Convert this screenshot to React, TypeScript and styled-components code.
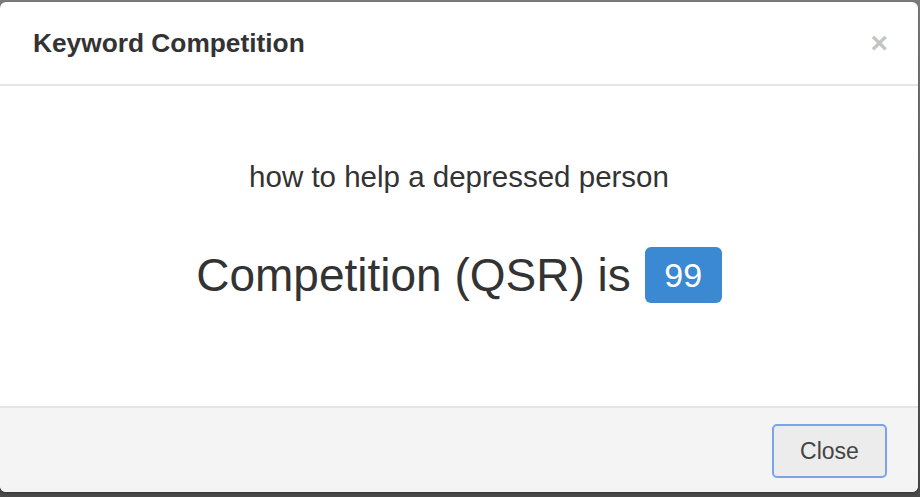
import React from "react";
import styled, { createGlobalStyle } from "styled-components";

const GlobalStyle = createGlobalStyle`
  html, body {
    margin: 0;
    padding: 0;
    height: 100%;
    overflow: hidden;
    background: #5a5a5a;
    font-family: "Liberation Sans", Arial, Helvetica, sans-serif;
  }
`;

const Backdrop = styled.div`
  height: 497px;
  padding-top: 2px;
  box-sizing: border-box;
  background: linear-gradient(#7c7c7c 0, #7c7c7c 10px, #4a4a4a 480px);
`;

const Modal = styled.div`
  width: 918px;
  height: 490px;
  background: #fff;
  border-radius: 6px;
  display: flex;
  flex-direction: column;
  overflow: hidden;
  box-shadow: 0 1px 3px rgba(0, 0, 0, 0.3);
`;

const Header = styled.div`
  height: 82px;
  flex: none;
  display: flex;
  align-items: center;
  justify-content: space-between;
  padding: 0 30px 0 33px;
  border-bottom: 2px solid #e5e5e5;
  box-sizing: content-box;
`;

const Title = styled.h4`
  margin: 0;
  font-size: 26.3px;
  font-weight: bold;
  color: #333;
`;

const CloseX = styled.button`
  border: none;
  background: none;
  padding: 0;
  font-size: 30px;
  font-weight: bold;
  line-height: 1;
  color: #c4c4c4;
  font-family: "Liberation Sans", Arial, sans-serif;
  cursor: pointer;
`;

const Body = styled.div`
  flex: 1;
  display: flex;
  flex-direction: column;
  align-items: center;
  padding-top: 76px;
  color: #333;
`;

const Keyword = styled.div`
  font-size: 29.5px;
  line-height: 30px;
`;

const Result = styled.div`
  margin-top: 55px;
  display: flex;
  align-items: center;
  gap: 14px;
  font-size: 46px;
  line-height: 56px;
`;

const Badge = styled.span`
  display: inline-flex;
  align-items: center;
  justify-content: center;
  width: 77px;
  height: 56px;
  border-radius: 6px;
  background: #3a89d2;
  color: #fff;
  font-size: 34px;
`;

const Footer = styled.div`
  height: 82px;
  flex: none;
  display: flex;
  align-items: center;
  justify-content: flex-end;
  padding: 2px 31px 0;
  background: #f4f4f4;
  border-top: 2px solid #e5e5e5;
`;

const Button = styled.button`
  width: 115px;
  height: 54px;
  border: 2px solid #7ba3ea;
  border-radius: 5px;
  background: #ececec;
  color: #444;
  font-size: 23px;
  font-family: "Liberation Sans", Arial, sans-serif;
  cursor: pointer;
`;

export default function App() {
  return (
    <>
      <GlobalStyle />
      <Backdrop>
        <Modal>
          <Header>
            <Title>Keyword Competition</Title>
            <CloseX aria-label="Close">×</CloseX>
          </Header>
          <Body>
            <Keyword>how to help a depressed person</Keyword>
            <Result>
              Competition (QSR) is <Badge>99</Badge>
            </Result>
          </Body>
          <Footer>
            <Button>Close</Button>
          </Footer>
        </Modal>
      </Backdrop>
    </>
  );
}
